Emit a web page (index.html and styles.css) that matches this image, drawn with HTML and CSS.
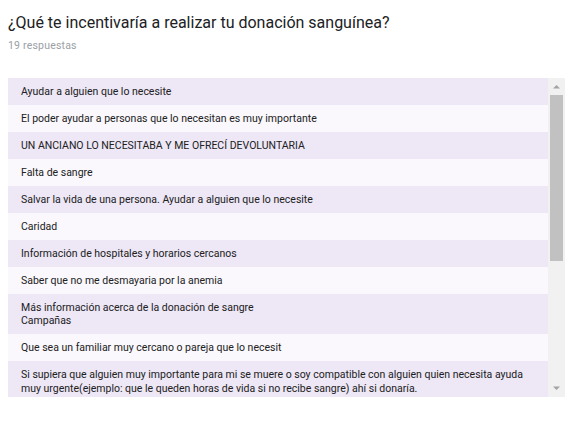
FILE: index.html
```html
<!DOCTYPE html>
<html lang="es">
<head>
<meta charset="utf-8">
<title>Respuestas</title>
<link rel="stylesheet" href="styles.css">
</head>
<body>
<div class="card">
  <h1 class="title">¿Qué te incentivaría a realizar tu donación sanguínea?</h1>
  <div class="count">19 respuestas</div>
  <div class="box">
    <div class="list">
      <div class="row">Ayudar a alguien que lo necesite</div>
      <div class="row">El poder ayudar a personas que lo necesitan es muy importante</div>
      <div class="row">UN ANCIANO LO NECESITABA Y ME OFRECÍ DEVOLUNTARIA</div>
      <div class="row">Falta de sangre</div>
      <div class="row">Salvar la vida de una persona. Ayudar a alguien que lo necesite</div>
      <div class="row">Caridad</div>
      <div class="row">Información de hospitales y horarios cercanos</div>
      <div class="row">Saber que no me desmayaria por la anemia</div>
      <div class="row">Más información acerca de la donación de sangre<br>Campañas</div>
      <div class="row">Que sea un familiar muy cercano o pareja que lo necesit</div>
      <div class="row">Si supiera que alguien muy importante para mi se muere o soy compatible con alguien quien necesita ayuda muy urgente(ejemplo: que le queden horas de vida si no recibe sangre) ahí si donaría.</div>
    </div>
    <div class="scrollbar">
      <div class="sb-btn">
        <svg width="17" height="17" viewBox="0 0 17 17"><polygon points="5,10.5 8.5,7 12,10.5" fill="#a3a3a3"/></svg>
      </div>
      <div class="sb-track">
        <div class="sb-thumb"></div>
      </div>
      <div class="sb-btn">
        <svg width="17" height="17" viewBox="0 0 17 17"><polygon points="5,6.5 12,6.5 8.5,10" fill="#a3a3a3"/></svg>
      </div>
    </div>
  </div>
</div>
</body>
</html>
```
FILE: styles.css
```css
html, body {
  margin: 0;
  padding: 0;
  background: #ffffff;
}

.card {
  padding: 13px 10px 0 8px;
  font-family: Roboto, "Liberation Sans", Arial, sans-serif;
}

.title {
  margin: 0;
  font-size: 16px;
  line-height: 20px;
  font-weight: 400;
  color: #202124;
}

.count {
  margin-top: 6.4px;
  font-size: 10.5px;
  line-height: 14px;
  color: #9aa0a6;
  letter-spacing: 0.2px;
}

.box {
  margin-top: 24.6px;
  height: 319.5px;
  display: flex;
  overflow: hidden;
}

.list {
  flex: 1;
  min-width: 0;
  overflow: hidden;
  background: #faf8fd;
}

.row {
  padding: 6.75px 13px;
  font-size: 10.5px;
  line-height: 13.5px;
  color: #212121;
  background: #faf8fd;
}

.row:nth-child(odd) {
  background: #ede7f6;
}

.scrollbar {
  width: 17px;
  flex: none;
  display: flex;
  flex-direction: column;
  background: #f1f1f1;
}

.sb-btn {
  height: 17px;
  flex: none;
}

.sb-btn svg {
  display: block;
}

.sb-track {
  flex: 1;
  padding: 0 2px;
}

.sb-thumb {
  height: 166px;
  background: #c1c1c1;
}
```
